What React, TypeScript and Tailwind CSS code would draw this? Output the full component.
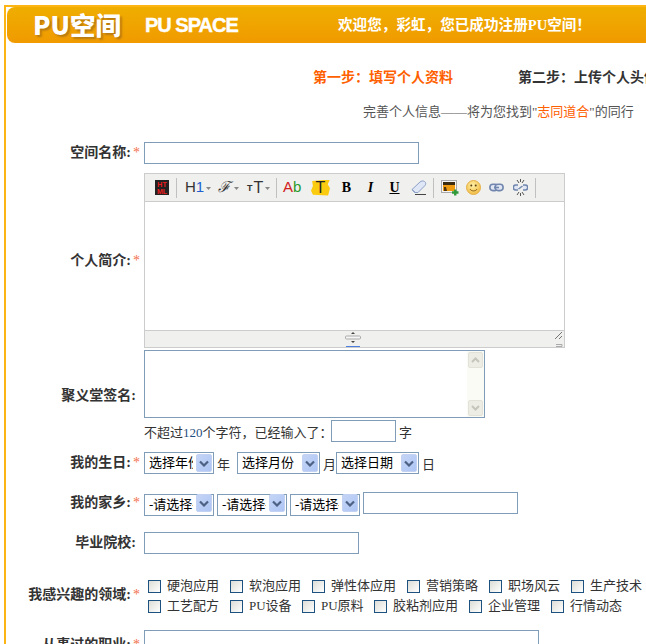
import React from "react";

const serif = "[font-family:'Liberation_Serif','Noto_Sans_CJK_SC',serif]";

function Label({ text, star = true, className = "" }: { text: string; star?: boolean; className?: string }) {
  return (
    <div className={`w-[144px] shrink-0 flex justify-end text-[14px] font-bold text-[#333] ${star ? "pr-[4px]" : "pr-[8px]"} ${className}`}>
      <span className="whitespace-nowrap">{text}:</span>
      {star && <span className="ml-[2px] font-normal text-[#f2704d]">*</span>}
    </div>
  );
}

function Select({ w, text }: { w: number; text: string }) {
  return (
    <div className="relative h-[22px] shrink-0" style={{ width: w }}>
      <select
        defaultValue={text}
        className="appearance-none w-full h-full border border-[#7f9db9] bg-white pl-[4px] pr-[20px] text-[13px] text-black rounded-none outline-none"
      >
        <option>{text}</option>
      </select>
      <span className="absolute right-[2px] top-[2px] w-[16px] h-[18px] rounded-[2px] bg-gradient-to-br from-[#c4d4f5] to-[#aec6f5] border border-[#c3d2f3] flex items-center justify-center pointer-events-none">
        <svg width="10" height="7" viewBox="0 0 10 7">
          <path d="M1 1.500l4 4 4-4" fill="none" stroke="#4d6185" strokeWidth="2.200" />
        </svg>
      </span>
    </div>
  );
}

function Check({ text, w }: { text: string; w: number }) {
  return (
    <label className="flex items-center shrink-0" style={{ width: w }}>
      <input
        type="checkbox"
        className="appearance-none w-[13px] h-[13px] m-0 ml-[4px] border border-[#1c5180] bg-gradient-to-br from-[#dcdcd7] to-white rounded-none"
      />
      <span className="ml-[6px] text-[13px] whitespace-nowrap">{text}</span>
    </label>
  );
}

function Sep() {
  return <span className="w-px h-[20px] bg-[#c0c0c0] shrink-0" />;
}

function Caret() {
  return (
    <svg width="5" height="3" viewBox="0 0 5 3" className="ml-[2px] mt-[2px] shrink-0">
      <path d="M0 0h5L2.500 3z" fill="#888" />
    </svg>
  );
}

function Toolbar() {
  const sans = "[font-family:'Liberation_Sans',sans-serif]";
  const rom = "[font-family:'Liberation_Serif',serif]";
  return (
    <div className="h-[28px] bg-[#f0f0ee] border-b border-[#ccc] flex items-center pl-[10px] text-black">
      <span className={`w-[14px] h-[15px] bg-[#222] text-[#ee1c1c] text-[7px] leading-[7px] font-bold text-center overflow-hidden pt-px shrink-0 ${sans}`}>
        HT<br />ML
      </span>
      <span className="w-[7px] shrink-0" /><Sep /><span className="w-[8px] shrink-0" />
      <span className={`flex items-center w-[23px] text-[15px] text-[#333] shrink-0 ${sans}`}>
        H<span className="text-[#1f5fd0]">1</span><Caret />
      </span>
      <span className="w-[10px] shrink-0" />
      <span className="flex items-center w-[29px] text-[15px] text-[#333] shrink-0 [font-family:'DejaVu_Serif',serif]">
        <span className="w-[14px] italic">ℱ</span><Caret />
      </span>
      <span className={`flex items-center w-[26px] text-[#333] text-[16px] shrink-0 ${sans}`}>
        <span className="text-[9px] font-bold mt-[3px] mr-[1px]">T</span>T<Caret />
      </span>
      <span className="w-[3px] shrink-0" /><Sep /><span className="w-[6px] shrink-0" />
      <span className={`w-[18px] text-[15px] text-center shrink-0 ${sans}`}>
        <span className="text-[#d02020]">A</span><span className="text-[#2a9a2a]">b</span>
      </span>
      <span className="w-[10px] shrink-0" />
      <span className={`w-[19px] h-[16px] bg-[#fbcb10] text-[16px] leading-[16px] text-[#222] text-center shrink-0 [clip-path:polygon(6%_10%,100%_0,88%_30%,100%_55%,90%_100%,10%_95%,0_70%,10%_40%)] ${sans}`}>
        T
      </span>
      <span className="w-[11px] shrink-0" />
      <span className={`w-[11px] text-center text-[14px] font-bold shrink-0 ${rom}`}>B</span>
      <span className="w-[13px] shrink-0" />
      <span className={`w-[11px] text-center text-[14px] font-bold italic shrink-0 ${rom}`}>I</span>
      <span className="w-[13px] shrink-0" />
      <span className={`w-[11px] text-center text-[14px] font-bold underline shrink-0 ${rom}`}>U</span>
      <span className="w-[11px] shrink-0" />
      <svg width="16" height="15" viewBox="0 0 16 15" className="shrink-0">
        <path d="M1 9.500L9 2c1-1 3-1.500 4.500-.5S15 4 14 5.500L7 12.500H3.500z" fill="#dfe6f5" stroke="#8ba0c8" />
        <path d="M1 9.500l3.500 3" stroke="#8ba0c8" fill="none" />
        <path d="M4 14.500h11" stroke="#444" />
      </svg>
      <span className="w-[6px] shrink-0" /><Sep /><span className="w-[7px] shrink-0" />
      <svg width="18" height="16" viewBox="0 0 18 16" className="shrink-0">
        <rect x="0.500" y="0.500" width="15" height="12" fill="#f4f4f4" stroke="#a9a9a9" />
        <rect x="2" y="2" width="12" height="9" fill="#ee9a10" />
        <rect x="2" y="2" width="12" height="3" fill="#3a2a10" />
        <path d="M3 11V7h2l1 4z" fill="#4e320e" />
        <path d="M11 12.500h6.500M14.250 9.500v6" stroke="#2f9a3a" strokeWidth="2.400" />
      </svg>
      <span className="w-[7px] shrink-0" />
      <svg width="15" height="15" viewBox="0 0 15 15" className="shrink-0">
        <defs>
          <radialGradient id="sm" cx="0.450" cy="0.350" r="0.700">
            <stop offset="0" stopColor="#fff1a8" />
            <stop offset="1" stopColor="#f0b73a" />
          </radialGradient>
        </defs>
        <circle cx="7.500" cy="7.500" r="7" fill="url(#sm)" stroke="#e5b04a" />
        <circle cx="5.300" cy="5.500" r="1" fill="#5b4210" />
        <circle cx="9.700" cy="5.500" r="1" fill="#5b4210" />
        <path d="M4 9c1 2.500 6 2.500 7 0" fill="none" stroke="#8a5a10" />
      </svg>
      <span className="w-[8px] shrink-0" />
      <svg width="15" height="9" viewBox="0 0 15 9" className="shrink-0">
        <rect x="0.900" y="1.200" width="8" height="6.400" rx="3" fill="#dfe5f2" stroke="#7186ae" strokeWidth="1.600" />
        <rect x="6.100" y="1.200" width="8" height="6.400" rx="3" fill="#dfe5f2" stroke="#7186ae" strokeWidth="1.600" />
        <path d="M5 4.500h5" stroke="#7186ae" strokeWidth="1.600" />
      </svg>
      <span className="w-[9px] shrink-0" />
      <svg width="15" height="17" viewBox="0 0 15 17" className="shrink-0">
        <path d="M5 6H2.800a2.500 2.500 0 000 5H5M10 6h2.200a2.500 2.500 0 010 5H10M5.500 10L9.500 7" fill="#dfe5f2" stroke="#7186ae" strokeWidth="1.500" />
        <path d="M4 1l2 3M11 1L9 4M4 16l2-3M11 16l-2-3M7.500 0v3M7.500 14v3" stroke="#555" />
      </svg>
      <span className="w-[7px] shrink-0" /><Sep />
    </div>
  );
}

export default function App() {
  const row1 = [
    ["硬泡应用", 82], ["软泡应用", 82], ["弹性体应用", 95], ["营销策略", 82], ["职场风云", 82], ["生产技术", 82],
  ] as const;
  const row2 = [
    ["工艺配方", 82], ["PU设备", 72], ["PU原料", 72], ["胶粘剂应用", 95], ["企业管理", 82], ["行情动态", 82],
  ] as const;

  return (
    <div className={`w-[646px] h-[644px] overflow-hidden bg-white text-[#333] pl-[4px] pt-[5px] ${serif}`}>
      <div className="w-[700px] h-[700px] border-l-2 border-t-2 border-[#fdb515]">
        {/* header */}
        <div className="ml-px h-[36px] flex items-center rounded-l-[8px] bg-gradient-to-b from-[#efae00] to-[#f09a00] text-white">
          <span className="ml-[26px] w-[112px] text-[25.5px] font-black leading-none -translate-y-px [font-family:'Noto_Sans_CJK_SC',sans-serif] [text-shadow:2px_2px_2px_#b97a10]">
            PU空间
          </span>
          <span className="w-[193px] text-[20px] font-bold leading-none tracking-[-1px] [font-family:'Liberation_Sans',sans-serif] [-webkit-text-stroke:0.4px_white]">
            PU SPACE
          </span>
          <span className="text-[14.6px] font-bold whitespace-nowrap translate-y-px">欢迎您，彩虹，您已成功注册PU空间！</span>
        </div>

        {/* steps */}
        <div className="flex h-[20px] mt-[24px] pl-[307px] items-center text-[14px] font-bold whitespace-nowrap">
          <span className="w-[205px] text-[#ff6000]">第一步：填写个人资料</span>
          <span className="text-[#333]">第二步：上传个人头像</span>
        </div>
        <div className="h-[20px] mt-[15px] pl-[357px] flex items-center text-[13px] text-[#555] whitespace-nowrap">
          完善个人信息——将为您找到"<span className="text-[#ff6000]">志同道合</span>"的同行
        </div>

        {/* name */}
        <div className="flex items-center mt-[20px] h-[22px] -ml-[6px]">
          <Label text="空间名称" className="-translate-y-px" />
          <input className="w-[275px] h-[22px] border border-[#7f9db9] outline-none" />
        </div>

        {/* editor */}
        <div className="flex items-center mt-[9px] -ml-[6px]">
          <Label text="个人简介" />
          <div className="w-[421px] h-[175px] border border-[#ccc] flex flex-col">
            <Toolbar />
            <div className="flex-1 bg-white" />
            <div className="relative h-[17px] bg-[#f0f0ee] border-t border-[#ccc] flex justify-center">
              <svg width="16" height="16" viewBox="0 0 16 16" className="mr-[4px]">
                <path d="M8 1l2 2H6zM8 12l2-2H6z" fill="#444" />
                <rect x="0.500" y="5" width="15" height="3" rx="1" fill="#f6f6f6" stroke="#aaa" />
                <path d="M1 15.500h14" stroke="#4a7fe0" />
              </svg>
              <svg width="8" height="8" viewBox="0 0 8 8" className="absolute right-[1px] top-[1px]">
                <path d="M0 7L7 0M4 7l3-3" stroke="#777" />
              </svg>
              <svg width="7" height="3" viewBox="0 0 7 3" className="absolute right-[1px] bottom-0">
                <path d="M0 .5h6v2H0" fill="none" stroke="#aaa" />
              </svg>
            </div>
          </div>
        </div>

        {/* signature */}
        <div className="flex items-center mt-[2px] -ml-[6px]">
          <Label text="聚义堂签名" star={false} className="pt-[22px]" />
          <div className="relative w-[341px] h-[68px]">
            <textarea className="block w-full h-full border border-[#7f9db9] resize-none outline-none" />
            <div className="absolute right-px top-px bottom-px w-[17px] bg-[#fbfbf6] flex flex-col justify-between py-px">
              <span className="h-[16px] w-[15px] ml-px bg-[#eeede5] border border-[#e3e2d8] rounded-[2px] flex items-center justify-center">
                <svg width="9" height="6" viewBox="0 0 9 6"><path d="M1 5l3.500-3.500L8 5" fill="none" stroke="#c5c5bc" strokeWidth="2" /></svg>
              </span>
              <span className="h-[16px] w-[15px] ml-px bg-[#eeede5] border border-[#e3e2d8] rounded-[2px] flex items-center justify-center">
                <svg width="9" height="6" viewBox="0 0 9 6"><path d="M1 1l3.500 3.500L8 1" fill="none" stroke="#c5c5bc" strokeWidth="2" /></svg>
              </span>
            </div>
          </div>
        </div>
        <div className="flex items-center mt-[2px] h-[22px] pl-[138px] text-[13px] whitespace-nowrap">
          <span className="w-[187px] translate-y-[2px]">不超过<span className="text-[#1f4f80]">120</span>个字符，已经输入了：</span>
          <input className="w-[65px] h-[22px] border border-[#7f9db9] outline-none" />
          <span className="ml-[3px] translate-y-[2px]">字</span>
        </div>

        {/* birthday */}
        <div className="flex items-center mt-[10px] h-[22px] -ml-[6px] text-[13px]">
          <Label text="我的生日" className="-translate-y-px" />
          <Select w={70} text="选择年份" />
          <span className="w-[23px] pl-[3px] translate-y-[2px]">年</span>
          <Select w={83} text="选择月份" />
          <span className="w-[16px] pl-[3px] translate-y-[2px]">月</span>
          <Select w={83} text="选择日期" />
          <span className="pl-[3px] translate-y-[2px]">日</span>
        </div>

        {/* home */}
        <div className="flex items-center mt-[18px] h-[22px] -ml-[6px] gap-[3px]">
          <div className="-mr-[3px]"><Label text="我的家乡" className="-translate-y-px" /></div>
          <Select w={70} text="-请选择-" />
          <Select w={70} text="-请选择-" />
          <Select w={70} text="-请选择-" />
          <input className="w-[155px] h-[22px] border border-[#7f9db9] outline-none" />
        </div>

        {/* school */}
        <div className="flex items-center mt-[18px] h-[22px] -ml-[6px]">
          <Label text="毕业院校" star={false} className="-translate-y-px" />
          <input className="w-[215px] h-[22px] border border-[#7f9db9] outline-none" />
        </div>

        {/* interests */}
        <div className="flex items-center mt-[22px] -ml-[6px]">
          <Label text="我感兴趣的领域" className="-translate-y-[2px]" />
          <div className="flex flex-col">
            <div className="flex h-[20px]">
              {row1.map(([t, w]) => <Check key={t} text={t} w={w} />)}
            </div>
            <div className="flex h-[20px]">
              {row2.map(([t, w]) => <Check key={t} text={t} w={w} />)}
            </div>
          </div>
        </div>

        {/* occupation */}
        <div className="flex items-start mt-[14px] -ml-[6px]">
          <Label text="从事过的职业" className="pt-[4px]" />
          <input className="w-[395px] h-[22px] border border-[#7f9db9] outline-none" />
        </div>
      </div>
    </div>
  );
}
